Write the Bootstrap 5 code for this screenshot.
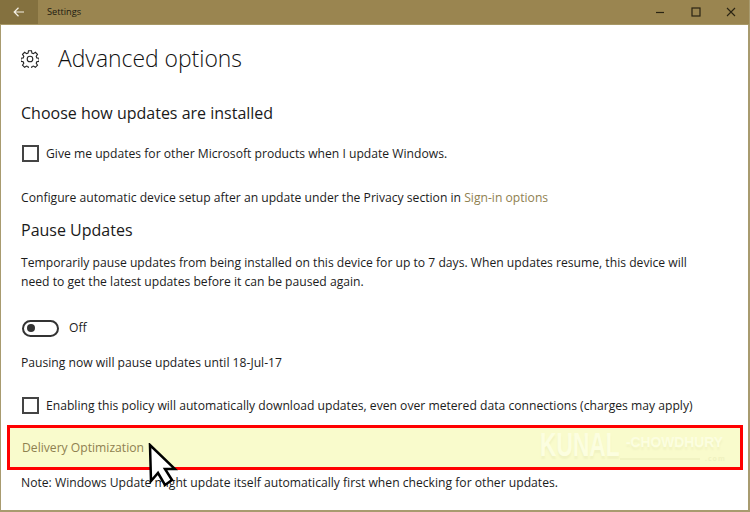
<!DOCTYPE html>
<html lang="en">
<head>
    <meta charset="UTF-8">
    <title>Settings</title>
    <link href="https://cdn.jsdelivr.net/npm/bootstrap@5.3.0/dist/css/bootstrap.min.css" rel="stylesheet">
    <style>
        html, body { height: 512px; overflow: hidden; }
        body {
            font-family: "Open Sans", "Noto Sans", sans-serif;
            font-size: 12.15px;
            color: #1c1c1c;
            background: #fff;
        }
        .win-frame {
            height: 512px;
            border: 1px solid #a89b6f;
            border-width: 0 2px 2px 1px;
        }
        .title-bar { height: 25px; flex: none; background: #9a8550; border-bottom: 1px solid #a89866; margin-right: -1px; margin-left: -1px; }
        .back-btn { width: 38px; background: #84713f; color: #f4f0e4; }
        .title-text { font-size: 9.2px; color: #1d1a10; padding-left: 9px; }
        .win-btn { width: 35.500px; }
        .page-body { padding-left: 20px; }
        .page-head { height: 68px; }
        .page-head h1 { font-size: 22.9px; font-weight: 300; margin: -1px 0 0 19px; color: #111; }
        .section-title { font-size: 16px; font-weight: 400; margin: 0; color: #1a1a1a; line-height: 22px; }
        .win-check { width: 17px; height: 17px; border: 2px solid #444; flex: none; margin-left: 1px; }
        .copy-line { margin: 0; line-height: 19px; }
        .accent { color: #8f8150; }
        .toggle-row { gap: 10px; }
        .check-row { gap: 7px; }
        .toggle-track { width: 37px; height: 17px; border: 2px solid #333; border-radius: 9px; margin-left: 1px; padding-left: 3px; }
        .toggle-dot { width: 8px; height: 8px; border-radius: 50%; background: #333; }
        .hl-box {
            position: relative;
            height: 45px;
            margin: 10px 5px 0 -14px;
            border: 3px solid #f00;
            background: #f9fbcc;
            padding-left: 12px;
        }
        .watermark {
            position: absolute;
            left: 530px;
            top: 3px;
            color: #fcfee0;
            font-family: "Liberation Sans", sans-serif;
            font-weight: 700;
            white-space: nowrap;
            text-shadow: 0 3px 2px #f1f3c2;
        }
        .wm-big, .wm-small { position: absolute; top: 0; line-height: 28px; transform-origin: left center; }
        .wm-big { left: 0; font-size: 33px; transform: scaleX(.69); }
        .wm-small { left: 86px; top: -3px; font-size: 15px; transform: scaleX(.92); }
        .wm-rule { position: absolute; left: 610px; top: 30px; width: 80px; height: 2px; background: #f1f3c2; }
        .wm-dot { position: absolute; left: 695px; top: 26px; font-size: 7px; line-height: 10px; color: #f0f2c0; font-weight: 700; letter-spacing: 1px; }
        .mouse-ptr { position: absolute; left: 138px; top: 15px; }
        .gap-9 { margin-top: 9px; }
        .gap-20 { margin-top: 20px; }
        .gap-25 { margin-top: 25px; }
        .gap-12 { margin-top: 12px; }
        .gap-28 { margin-top: 28px; }
        .gap-16 { margin-top: 16px; }
        .gap-24 { margin-top: 24px; }
        .gap-3px { margin-top: 3px; }
    </style>
</head>
<body>
    <div class="win-frame d-flex flex-column">
        <div class="title-bar d-flex align-items-stretch">
            <div class="back-btn d-flex align-items-center justify-content-center">
                <svg width="12" height="10" viewBox="0 0 12 10"><path d="M1 5h10M5.500 .8 1.200 5l4.300 4.200" fill="none" stroke="currentColor" stroke-width="1.200"/></svg>
            </div>
            <div class="title-text d-flex align-items-center">Settings</div>
            <div class="d-flex ms-auto">
                <div class="win-btn d-flex align-items-center justify-content-center">
                    <svg width="10" height="10" viewBox="0 0 10 10"><path d="M1 5.500h8" stroke="#2a2413" stroke-width="1.200"/></svg>
                </div>
                <div class="win-btn d-flex align-items-center justify-content-center">
                    <svg width="10" height="10" viewBox="0 0 10 10"><rect x="1" y="1" width="8" height="8" fill="none" stroke="#2a2413" stroke-width="1.200"/></svg>
                </div>
                <div class="win-btn d-flex align-items-center justify-content-center">
                    <svg width="10" height="10" viewBox="0 0 10 10"><path d="M1 1l8 8M9 1l-8 8" stroke="#2a2413" stroke-width="1.100"/></svg>
                </div>
            </div>
        </div>
        <div class="page-body flex-grow-1">
            <div class="page-head d-flex align-items-center">
                <svg width="18" height="18" viewBox="0 0 18 18" fill="none" stroke="#222" stroke-width="1.100"><circle cx="9" cy="9" r="2.800"/><path d="M7.500 .7h3l.4 2.300 1.500.6 2-1.300 2.100 2.100-1.300 2 .6 1.500 2.300.4v3l-2.300.4-.6 1.500 1.300 2-2.100 2.100-2-1.300-1.500.6-.4 2.300h-3l-.4-2.300-1.500-.6-2 1.300-2.100-2.100 1.300-2-.6-1.500-2.300-.4v-3l2.300-.4.6-1.500-1.300-2 2.100-2.100 2 1.300 1.500-.6z"/></svg>
                <h1>Advanced options</h1>
            </div>
            <h2 class="section-title gap-9">Choose how updates are installed</h2>
            <div class="d-flex align-items-center check-row gap-20">
                <div class="win-check"></div>
                <p class="copy-line">Give me updates for other Microsoft products when I update Windows.</p>
            </div>
            <p class="copy-line gap-25">Configure automatic device setup after an update under the Privacy section in <span class="accent">Sign-in options</span></p>
            <h2 class="section-title gap-12">Pause Updates</h2>
            <p class="copy-line gap-12">Temporarily pause updates from being installed on this device for up to 7 days. When updates resume, this device will<br>need to get the latest updates before it can be paused again.</p>
            <div class="d-flex align-items-center toggle-row gap-28">
                <div class="toggle-track d-flex align-items-center"><div class="toggle-dot"></div></div>
                <span>Off</span>
            </div>
            <p class="copy-line gap-16">Pausing now will pause updates until 18-Jul-17</p>
            <div class="d-flex align-items-center check-row gap-24">
                <div class="win-check"></div>
                <p class="copy-line">Enabling this policy will automatically download updates, even over metered data connections (charges may apply)</p>
            </div>
            <div class="hl-box d-flex align-items-center">
                <span class="accent">Delivery Optimization</span>
                <div class="watermark"><span class="wm-big">KUNAL</span><span class="wm-small">-CHOWDHURY</span></div>
                <div class="wm-rule"></div>
                <div class="wm-dot">.com</div>
                <svg class="mouse-ptr" width="30" height="44" viewBox="0 0 30 44"><path d="M2 2 3 38l7-8 7 12 7-5-7-11h10z" fill="#fff" stroke="#000" stroke-width="2.500"/></svg>
            </div>
            <p class="copy-line gap-3px">Note: Windows Update might update itself automatically first when checking for other updates.</p>
        </div>
    </div>
</body>
</html>
